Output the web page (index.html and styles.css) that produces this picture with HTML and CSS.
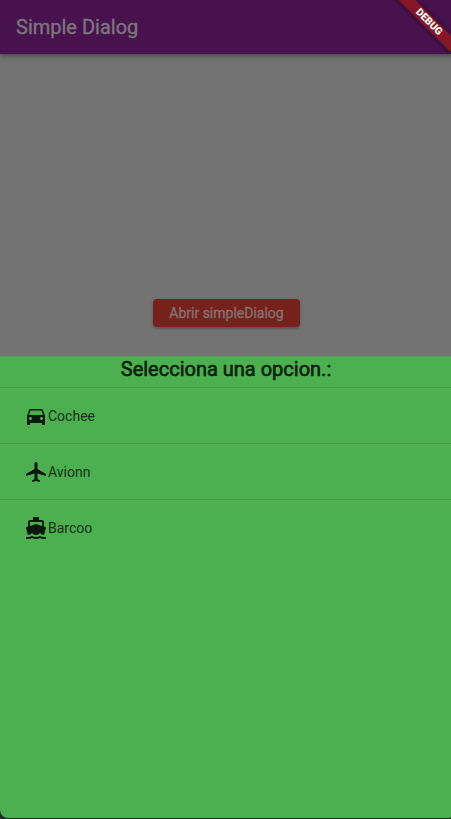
FILE: index.html
```html
<!DOCTYPE html>
<html lang="es">
<head>
<meta charset="utf-8">
<title>Simple Dialog</title>
<link rel="stylesheet" href="styles.css">
</head>
<body>
<div class="screen">
  <header class="appbar"><h1 class="appbar-title">Simple Dialog</h1></header>
  <div class="banner">DEBUG</div>
  <main class="content"><button class="open-button">Abrir simpleDialog</button></main>
  <section class="sheet">
    <h2 class="sheet-title">Selecciona una opcion.:</h2>
    <ul class="options">
      <li class="option">
        <svg class="icon" viewBox="0 0 24 24"><path d="M18.92 6.01C18.72 5.42 18.16 5 17.5 5h-11c-.66 0-1.21.42-1.42 1.01L3 12v8c0 .55.45 1 1 1h1c.55 0 1-.45 1-1v-1h12v1c0 .55.45 1 1 1h1c.55 0 1-.45 1-1v-8l-2.080-5.990zM6.500 16c-.83 0-1.500-.67-1.500-1.500S5.670 13 6.500 13s1.500.67 1.500 1.500S7.330 16 6.500 16zm11 0c-.83 0-1.500-.67-1.500-1.500s.67-1.500 1.500-1.500 1.500.67 1.500 1.500-.67 1.500-1.500 1.500zM5 11l1.500-4.500h11L19 11H5z"/></svg>
        <span>Cochee</span>
      </li>
      <li class="option">
        <svg class="icon" viewBox="0 0 24 24"><path d="M22 16v-2l-8.500-5V3.500c0-.83-.67-1.500-1.500-1.500s-1.500.67-1.500 1.500V9L2 14v2l8.500-2.500V19L8 20.500V22l4-1 4 1v-1.500L13.500 19v-5.500L22 16z"/></svg>
        <span>Avionn</span>
      </li>
      <li class="option">
        <svg class="icon" viewBox="0 0 24 24"><path d="M20 21c-1.390 0-2.780-.47-4-1.320-2.440 1.710-5.560 1.710-8 0C6.780 20.530 5.390 21 4 21H2v2h2c1.380 0 2.740-.35 4-.99 2.520 1.290 5.480 1.290 8 0 1.260.65 2.620.99 4 .99h2v-2h-2zM3.950 19H4c1.600 0 3.020-.88 4-2 .98 1.120 2.400 2 4 2s3.020-.88 4-2c.98 1.120 2.400 2 4 2h.05l1.890-6.680c.08-.26.06-.54-.06-.78s-.34-.42-.6-.5L20 10.620V6c0-1.100-.9-2-2-2h-3V1H9v3H6c-1.100 0-2 .9-2 2v4.620l-1.290.42c-.26.08-.48.26-.6.5s-.15.52-.06.78L3.950 19zM6 6h12v3.970L12 8 6 9.970V6z"/></svg>
        <span>Barcoo</span>
      </li>
    </ul>
  </section>
</div>
</body>
</html>
```

FILE: styles.css
```css
* { box-sizing: border-box; margin: 0; padding: 0; }
body { background: #262b26; font-family: Roboto, sans-serif; }
.screen {
  position: relative;
  display: flex;
  flex-direction: column;
  height: 819px;
  overflow: hidden;
}
.appbar {
  position: relative;
  display: flex;
  align-items: center;
  height: 54px;
  padding: 0 16px;
  background: #48124f;
  box-shadow: 0 2px 4px -1px rgba(0, 0, 0, .3), 0 4px 5px rgba(0, 0, 0, .12);
}
.appbar-title { color: #7b787c; font-size: 20px; font-weight: 400; line-height: 24px; -webkit-text-stroke: .35px currentColor; }
.banner {
  position: absolute;
  top: 15.5px;
  left: 379px;
  width: 100px;
  height: 12px;
  transform: rotate(45deg);
  background: #851724;
  box-shadow: 0 0 6px rgba(0, 0, 0, .5);
  color: #fff;
  font-size: 10.2px;
  font-weight: 900;
  line-height: 12px;
  text-align: center;
}
.content {
  display: flex;
  justify-content: center;
  height: 302px;
  padding: 245px 0 0 2px;
  background: #737373;
}
.open-button {
  width: 147px;
  height: 28px;
  border: 0;
  border-radius: 4px;
  background: #76211b;
  box-shadow: 0 2px 2px rgba(0, 0, 0, .16), 0 1px 4px rgba(0, 0, 0, .14);
  color: #84716f;
  font: 400 14px/28px Roboto, sans-serif;
  -webkit-text-stroke: .35px currentColor;
}
.sheet { height: 462px; border-top: 1px solid #5b9d5d; border-radius: 0 0 2px 8px; background: #4caf50; }
.sheet-title {
  height: 30px;
  padding: 0 0 0 1px;
  color: #0c1e0d;
  font-size: 20px;
  font-weight: 400;
  -webkit-text-stroke: .6px currentColor;
  line-height: 24px;
  text-align: center;
}
.options { list-style: none; }
.option {
  display: flex;
  align-items: center;
  height: 56px;
  padding-left: 24px;
  border-top: 1px solid #459f48;
  color: #0f2310;
  font-size: 14px;
}
.option span { opacity: .9; }
.icon { width: 24px; height: 24px; fill: #0a190b; }
```
